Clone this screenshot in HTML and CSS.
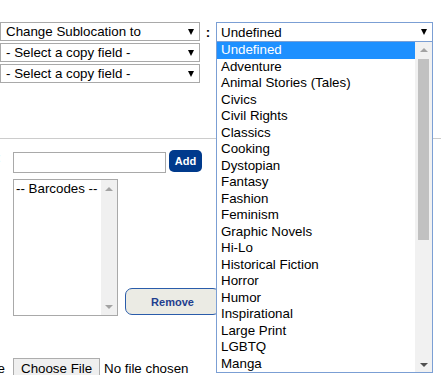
FILE: index.html
```html
<!DOCTYPE html>
<html lang="en">
<head>
  <meta charset="UTF-8">
  <title>Copy Fields</title>
  <link rel="stylesheet" href="styles.css">
</head>
<body>
  <div class="copy-row">
    <div class="copy-fields">
      <div class="pick">Change Sublocation to<span class="caret"></span></div>
      <div class="pick">- Select a copy field -<span class="caret"></span></div>
      <div class="pick">- Select a copy field -<span class="caret"></span></div>
    </div>
    <span class="colon">:</span>
    <div class="value-wrap">
      <div class="pick pick-open">Undefined<span class="caret"></span></div>
      <div class="menu">
        <ul class="menu-items">
          <li class="active">Undefined</li>
          <li>Adventure</li>
          <li>Animal Stories (Tales)</li>
          <li>Civics</li>
          <li>Civil Rights</li>
          <li>Classics</li>
          <li>Cooking</li>
          <li>Dystopian</li>
          <li>Fantasy</li>
          <li>Fashion</li>
          <li>Feminism</li>
          <li>Graphic Novels</li>
          <li>Hi-Lo</li>
          <li>Historical Fiction</li>
          <li>Horror</li>
          <li>Humor</li>
          <li>Inspirational</li>
          <li>Large Print</li>
          <li>LGBTQ</li>
          <li>Manga</li>
        </ul>
        <div class="scroll">
          <span class="arrow-up off"></span>
          <span class="thumb"></span>
          <span class="arrow-down"></span>
        </div>
      </div>
    </div>
  </div>

  <hr class="rule">

  <div class="line add-line">
    <div class="lbl lbl-blue"><span>Barcode:</span></div>
    <input type="text" class="code-input">
    <button class="btn-add">Add</button>
  </div>

  <div class="line list-line">
    <div class="lbl"></div>
    <div class="listbox">
      <div class="listbox-items">-- Barcodes --</div>
      <div class="scroll small">
        <span class="arrow-up off"></span>
        <span class="arrow-down off"></span>
      </div>
    </div>
    <button class="btn-remove">Remove</button>
  </div>

  <div class="line file-line">
    <div class="lbl lbl-file"><span>Import File</span></div>
    <span class="file-btn">Choose File</span>
    <span class="file-name">No file chosen</span>
  </div>
</body>
</html>
```

FILE: styles.css
```css
body {
  margin: 0;
  font-family: "Liberation Sans", Arial, sans-serif;
  font-size: 13.33px;
  color: #000;
  background: #fff;
  overflow: hidden;
}

.copy-row {
  display: flex;
  align-items: flex-start;
  padding-top: 22px;
}

.copy-fields {
  display: flex;
  flex-direction: column;
  gap: 2px;
  width: 200px;
}

.pick {
  box-sizing: border-box;
  height: 19px;
  border: 1px solid #a9a9a9;
  padding-left: 5px;
  display: flex;
  align-items: center;
  justify-content: space-between;
  white-space: nowrap;
  background: #fff;
}

.caret {
  width: 0;
  height: 0;
  border-left: 3.5px solid transparent;
  border-right: 3.5px solid transparent;
  border-top: 6px solid #000;
  margin-right: 5px;
}

.colon {
  width: 16px;
  text-align: center;
  line-height: 19px;
  margin-top: 1px;
  font-weight: bold;
}

.value-wrap {
  position: relative;
  width: 217px;
}

.pick-open {
  height: 20px;
  border-color: #7b9fd4;
  padding-left: 4px;
}

.menu {
  position: absolute;
  top: 19px;
  left: 0;
  width: 217px;
  height: 332px;
  box-sizing: border-box;
  border: 1px solid #7b9fd4;
  background: #fff;
  display: flex;
  z-index: 2;
}

.menu-items {
  list-style: none;
  margin: 0;
  padding: 0;
  flex: 1;
}

.menu-items li {
  height: 16.5px;
  line-height: 16.5px;
  padding-left: 4px;
  white-space: nowrap;
}

.menu-items li.active {
  background: #1e90ff;
  color: #fff;
}

.scroll {
  width: 17px;
  background: #f1f1f1;
  display: flex;
  flex-direction: column;
  align-items: center;
}

.arrow-up,
.arrow-down {
  width: 0;
  height: 0;
  border-left: 4px solid transparent;
  border-right: 4px solid transparent;
}

.arrow-up {
  border-bottom: 4px solid #505050;
  margin: 6px 0 7px;
}

.arrow-down {
  border-top: 4px solid #505050;
  margin: auto 0 5px;
}

.arrow-up.off {
  border-bottom-color: #a3a3a3;
}

.arrow-down.off {
  border-top-color: #a3a3a3;
}

.thumb {
  width: 11px;
  height: 181px;
  background: #c1c1c1;
  margin-left: -1px;
}

.rule {
  border: 0;
  border-top: 1px solid #ccc;
  margin: 55px 0 0;
}

.line {
  display: flex;
}

.lbl {
  width: 13px;
  overflow: hidden;
  display: flex;
  justify-content: flex-end;
  align-items: center;
  white-space: nowrap;
  flex-shrink: 0;
}

.lbl-blue {
  color: #8cc8ea;
}

.lbl-blue span {
  margin-right: 12px;
}

.lbl-file span {
  margin-right: 8px;
}

.add-line {
  margin-top: 11px;
  align-items: flex-start;
}

.code-input {
  box-sizing: border-box;
  width: 153px;
  height: 21px;
  margin: 2px 0 0;
  border: 1px solid #a9a9a9;
  padding: 0 2px;
  font: inherit;
}

.btn-add {
  margin-left: 3px;
  width: 33px;
  height: 22px;
  border: 0;
  border-radius: 5px;
  background: #003a8c;
  color: #fff;
  font-family: "Liberation Sans", Arial, sans-serif;
  font-weight: bold;
  font-size: 11px;
  padding: 0;
}

.list-line {
  margin-top: 6px;
  align-items: flex-end;
}

.listbox {
  box-sizing: border-box;
  width: 105px;
  height: 137px;
  border: 1px solid #a9a9a9;
  display: flex;
}

.listbox-items {
  flex: 1;
  padding: 1px 0 0 2px;
  white-space: nowrap;
  line-height: 15px;
}

.scroll.small {
  width: 16px;
  background: #f0f0f0;
}

.scroll.small .arrow-up {
  margin-top: 7px;
}

.scroll.small .arrow-down {
  margin-bottom: 6px;
}

.btn-remove {
  box-sizing: border-box;
  margin: 0 0 1px 7px;
  width: 95px;
  height: 27px;
  border: 1px solid #2a5caa;
  border-radius: 7px;
  background: #ebebe4;
  color: #1f3f8f;
  font-family: "Liberation Sans", Arial, sans-serif;
  font-weight: bold;
  font-size: 11px;
  padding: 0;
}

.file-line {
  margin-top: 42px;
  align-items: center;
}

.file-btn {
  box-sizing: border-box;
  width: 87px;
  height: 21px;
  border: 1px solid #adadad;
  background: #efefef;
  padding-left: 7px;
  line-height: 19px;
  white-space: nowrap;
}

.file-name {
  margin-left: 4px;
}
```
